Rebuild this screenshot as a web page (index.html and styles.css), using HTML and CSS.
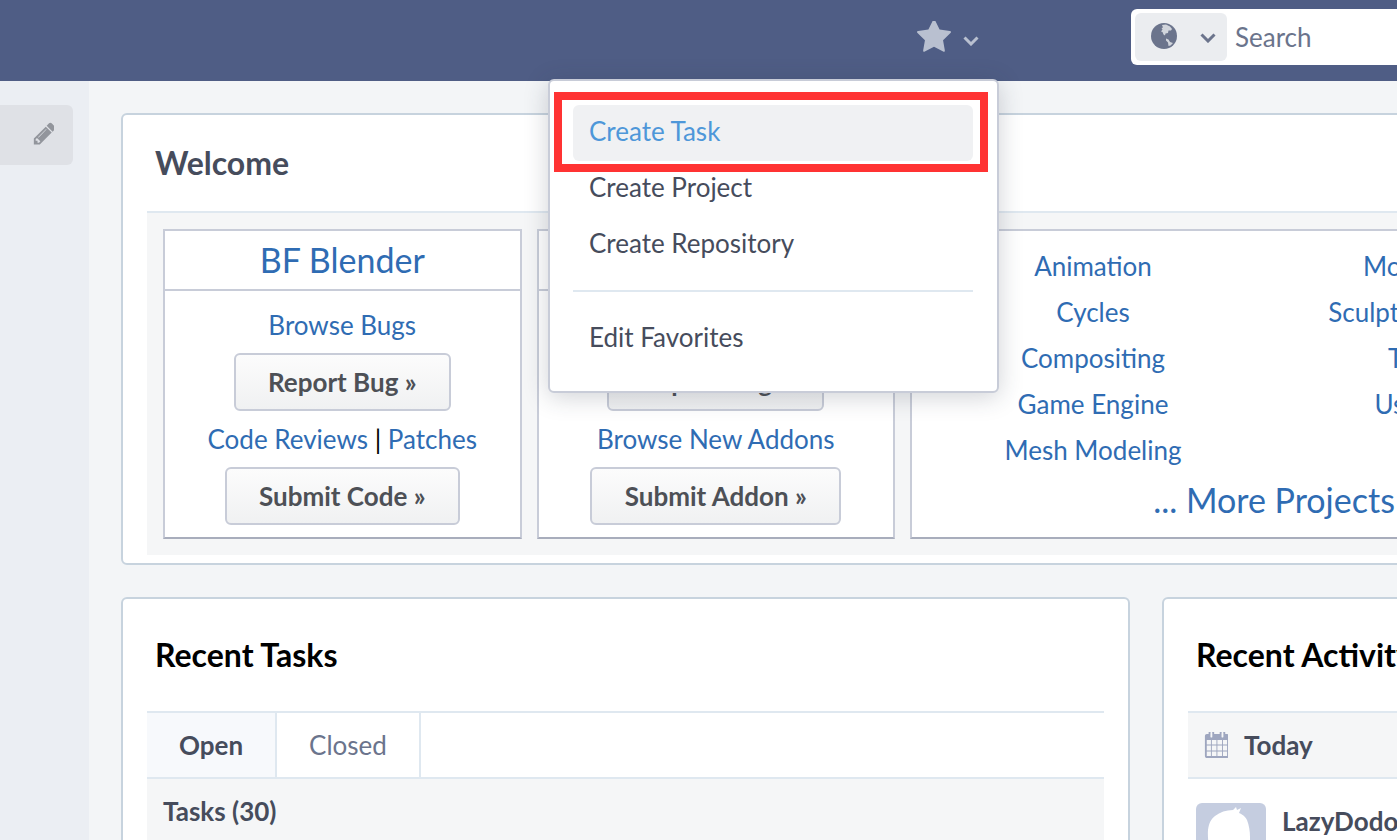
FILE: index.html
```html
<!DOCTYPE html>
<html lang="en">
<head>
<meta charset="utf-8">
<title>Blender Developer</title>
<link rel="stylesheet" href="styles.css">
</head>
<body>
<div class="page">
  <header class="topbar">
    <div class="spacer"></div>
    <div class="fav">
      <svg class="star" viewBox="0 128 1664 1536"><path d="M1664 647q0 22-26 48l-363 354 86 500q1 7 1 20 0 21-10.500 35.500t-30.500 14.500q-19 0-40-12l-449-236-449 236q-22 12-40 12-21 0-31.500-14.500t-10.500-35.500q0-6 2-20l86-500-364-354q-25-27-25-48 0-37 56-46l502-73 225-455q19-41 49-41t49 41l225 455 502 73q56 9 56 46z"/></svg>
      <svg class="chev-fav" viewBox="0 0 16 10"><polyline points="1.500,1.500 8,8 14.500,1.500"/></svg>
    </div>
    <div class="search">
      <div class="scope">
        <svg class="globe" viewBox="0 0 26 26">
          <circle cx="13" cy="13" r="13" fill="#6b748c"/>
          <path d="M11 2l4-.5 4 2 2 2.500-1 1.500-2.500 0-.5 2.500-2.500.5-.5 2-1.500-1-1-2.500-1.500-.5 1.500-2-1-1.500 1.500-.5z" fill="#ebedf0" opacity=".8"/>
          <path d="M15 15.500l2.500 1 1.500 2.500 3 1-2.500 2.500-2 .5-.5-3.500-2-2z" fill="#ebedf0" opacity=".8"/>
        </svg>
        <svg class="chev-scope" viewBox="0 0 16 10"><polyline points="1.500,1.500 8,8 14.500,1.500"/></svg>
      </div>
      <span class="search-text">Search</span>
    </div>
  </header>

  <div class="main">
    <aside class="sidebar">
      <div class="side-item">
        <svg class="pencil" viewBox="0 128 1536 1536"><path d="M491 1536l91-91-235-235-91 91v107h128v128h107zm523-928q0-22-22-22-10 0-17 7l-542 542q-7 7-7 17 0 22 22 22 10 0 17-7l542-542q7-7 7-17zm-54-192l416 416-832 832h-416v-416zm683 96q0 53-37 90l-166 166-416-416 166-165q36-38 90-38 53 0 91 38l235 234q37 39 37 91z"/></svg>
      </div>
    </aside>

    <main class="content">
      <section class="panel welcome">
        <h2 class="welcome-title">Welcome</h2>
        <div class="welcome-body">
          <div class="box box-a">
            <div class="box-title"><a class="link">BF Blender</a></div>
            <div class="box-body">
              <a class="link">Browse Bugs</a>
              <span class="btn btn-bug">Report Bug »</span>
              <div class="link-row"><a class="link">Code Reviews</a> <span class="pipe">|</span> <a class="link">Patches</a></div>
              <span class="btn btn-code">Submit Code »</span>
            </div>
          </div>
          <div class="box box-a">
            <div class="box-title"><a class="link">BF Addons</a></div>
            <div class="box-body">
              <a class="link">Browse Addons</a>
              <span class="btn btn-bug">Report Bug »</span>
              <div class="link-row"><a class="link">Browse New Addons</a></div>
              <span class="btn btn-addon">Submit Addon »</span>
            </div>
          </div>
          <div class="box box-projects">
            <div class="project-grid">
              <a class="link">Animation</a><a class="link">Motion Tracking</a>
              <a class="link">Cycles</a><a class="link">Sculpting and Painting</a>
              <a class="link">Compositing</a><a class="link">Text Editing</a>
              <a class="link">Game Engine</a><a class="link">User Interface</a>
              <a class="link">Mesh Modeling</a><span></span>
            </div>
            <a class="link more">... More Projects</a>
          </div>
        </div>
      </section>

      <div class="lower">
        <section class="panel tasks">
          <h2 class="lower-title">Recent Tasks</h2>
          <div class="tabs">
            <span class="tab tab-on">Open</span>
            <span class="tab tab-closed">Closed</span>
          </div>
          <div class="task-row">Tasks (30)</div>
        </section>
        <section class="panel activity">
          <h2 class="lower-title">Recent Activity</h2>
          <div class="day">
            <svg class="cal" viewBox="0 128 1664 1664" preserveAspectRatio="none"><path d="M192 1664h288v-288h-288v288zm352 0h320v-288h-320v288zm-352-352h288v-320h-288v320zm352 0h320v-320h-320v320zm-352-384h288v-288h-288v288zm736 736h320v-288h-320v288zm-384-736h320v-288h-320v288zm768 736h288v-288h-288v288zm-384-352h320v-320h-320v320zm-352-864v-288q0-13-9.500-22.500t-22.500-9.500h-64q-13 0-22.500 9.500t-9.500 22.500v288q0 13 9.500 22.500t22.500 9.500h64q13 0 22.500-9.500t9.500-22.500zm736 864h288v-320h-288v320zm-384-384h320v-288h-320v288zm384 0h288v-288h-288v288zm32-480v-288q0-13-9.500-22.500t-22.500-9.500h-64q-13 0-22.500 9.500t-9.500 22.500v288q0 13 9.500 22.500t22.500 9.500h64q13 0 22.500-9.500t9.500-22.500zm384-64v1280q0 52-38 90t-90 38h-1408q-52 0-90-38t-38-90v-1280q0-52 38-90t90-38h128v-96q0-66 47-113t113-47h64q66 0 113 47t47 113v96h384v-96q0-66 47-113t113-47h64q66 0 113 47t47 113v96h128q52 0 90 38t38 90z"/></svg>
            <span>Today</span>
          </div>
          <div class="feed">
            <div class="avatar">
              <svg class="bird" viewBox="0 0 70 70"><path d="M12 27C13 20 15 16 19 13 24 9 30 7 37 7L40 4 41 7 45 5 43 10C48 12 50 15 51 17 53 22 54 28 54 34L54 70H14C16 55 11 40 12 27Z" fill="#fff"/></svg>
            </div>
            <strong class="user">LazyDodo</strong>
          </div>
        </section>
      </div>
    </main>
  </div>

  <nav class="menu">
    <a class="menu-item menu-hover">Create Task</a>
    <a class="menu-item">Create Project</a>
    <a class="menu-item">Create Repository</a>
    <div class="menu-line"></div>
    <a class="menu-item">Edit Favorites</a>
  </nav>
  <div class="mark"></div>
</div>
</body>
</html>
```

FILE: styles.css
```css
* { box-sizing: border-box; }
html, body { margin: 0; padding: 0; }
body { font-family: Lato, "Liberation Sans", sans-serif; font-size: 26px; color: #464c5c; background: #f3f5f7; }
.page { position: relative; width: 1397px; height: 840px; overflow: hidden; }

.topbar { height: 81px; background: #4f5d85; display: flex; align-items: center; }
.spacer { flex: 1; }
.fav { display: flex; align-items: center; margin-right: 152px; }
.star { width: 34px; height: 32px; margin-top: -7px; fill: #b9c0d0; }
.chev-fav { width: 16px; height: 10px; margin: 0 0 0 12px; fill: none; stroke: #b9c0d0; stroke-width: 3; }
.search { width: 300px; height: 56px; margin-right: -34px; margin-top: -8px; background: #fff; border-radius: 6px; padding: 4px; display: flex; align-items: center; flex-shrink: 0; }
.scope { width: 92px; height: 48px; background: #ebedf0; border-radius: 6px; display: flex; align-items: center; padding-left: 16px; }
.globe { width: 26px; height: 26px; margin-top: -2px; }
.chev-scope { width: 16px; height: 10px; margin: 2px 0 0 23px; fill: none; stroke: #6b748c; stroke-width: 3; }
.search-text { margin: 1px 0 0 8px; color: #6b748c; }

.main { display: flex; height: 759px; }
.sidebar { width: 89px; flex-shrink: 0; background: #ebeef3; padding-top: 24px; padding-right: 16px; }
.side-item { height: 60px; background: #dfe1e6; border-radius: 0 6px 6px 0; display: flex; justify-content: flex-end; align-items: center; padding-right: 19px; }
.pencil { width: 22px; height: 23px; margin-top: -3px; fill: #92959c; }

.content { flex: 1; min-width: 0; padding: 32px 0 0 32px; }
.panel { background: #fff; border: 2px solid #c7d3de; border-radius: 6px; }
.welcome { width: 1540px; height: 452px; padding: 0 24px 8px; }
.welcome-title { margin: 0; height: 96px; font-size: 32px; line-height: 96px; font-weight: 700; color: #464c5c; padding-left: 8px; }
.welcome-body { height: 344px; background: #f5f6f7; border-top: 2px solid #dfe8f0; padding: 16px; display: flex; gap: 15px; }
.box { background: #fff; border: 2px solid #c8ccd8; border-bottom-color: #a8adbc; height: 310px; flex-shrink: 0; }
.box-a { width: 358.5px; }
.box-title { height: 60px; border-bottom: 2px solid #c8ccd8; text-align: center; font-size: 34px; line-height: 58px; }
.box-body { display: flex; flex-direction: column; align-items: center; padding-top: 15px; line-height: 38px; }
.link { color: #2f6cb3; text-decoration: none; }
.link-row { margin-top: -1px; }
.pipe { color: #000; }
.btn { display: block; height: 58px; margin: 9px 0 10px; border: 2px solid #c8ccd8; border-radius: 6px; background: linear-gradient(#fcfcfc, #f0f1f2); font-weight: 700; color: #4d5056; line-height: 54px; text-align: center; }
.btn-bug { width: 217px; }
.btn-code { width: 235px; }
.btn-addon { width: 251px; }
.box-projects { width: 728px; text-align: center; padding-top: 12px; }
.project-grid { display: grid; grid-template-columns: 362px 362px; grid-auto-rows: 46px; line-height: 46px; }
.more { display: block; font-size: 34px; line-height: 50px; margin-top: 2px; }

.lower { display: flex; gap: 32px; margin-top: 32px; }
.tasks { width: 1009px; height: 400px; padding: 0 24px; flex-shrink: 0; }
.activity { width: 500px; height: 400px; padding: 0 24px; flex-shrink: 0; }
.lower-title { margin: 0; height: 112px; font-size: 32px; line-height: 112px; font-weight: 700; color: #000; padding-left: 8px; }
.tabs { display: flex; height: 68px; border-top: 2px solid #dfe8f0; border-bottom: 2px solid #dfe8f0; }
.tab { display: block; line-height: 64px; text-align: center; border-right: 2px solid #dfe8f0; }
.tab-on { width: 130px; background: #f7f9fc; font-weight: 700; }
.tab-closed { width: 144px; color: #6b748c; }
.task-row { height: 66px; background: #f5f6f7; font-weight: 700; line-height: 64px; padding-left: 16px; }
.day { height: 68px; background: #f5f6f7; border-top: 2px solid #dfe8f0; border-bottom: 2px solid #dfe8f0; display: flex; align-items: center; padding-left: 16px; font-weight: 700; gap: 16px; }
.cal { width: 24px; height: 26px; fill: #9ea6bf; }
.feed { display: flex; padding: 24px 0 0 8px; gap: 16px; }
.avatar { width: 70px; height: 70px; background: #c5cde0; border-radius: 6px; overflow: hidden; flex-shrink: 0; }
.bird { display: block; width: 70px; height: 70px; }
.user { line-height: 36px; color: #464c5c; }

.menu { position: absolute; left: 547.5px; top: 79px; width: 451px; height: 314px; background: #fff; border: 2px solid #c8ccd8; border-radius: 6px; box-shadow: 0 4px 24px rgba(40, 50, 70, .22); padding: 24px 23.5px 0; }
.menu-item { display: block; height: 56px; line-height: 52px; padding-left: 16px; color: #464c5c; border-radius: 6px; }
.menu-hover { background: #f0f1f3; color: #4e97d9; }
.menu-line { height: 2px; background: #dfe8f0; margin: 17px 0 19px; }
.mark { position: absolute; left: 554px; top: 92px; width: 434px; height: 80px; border: 8px solid #ff3333; }
```
